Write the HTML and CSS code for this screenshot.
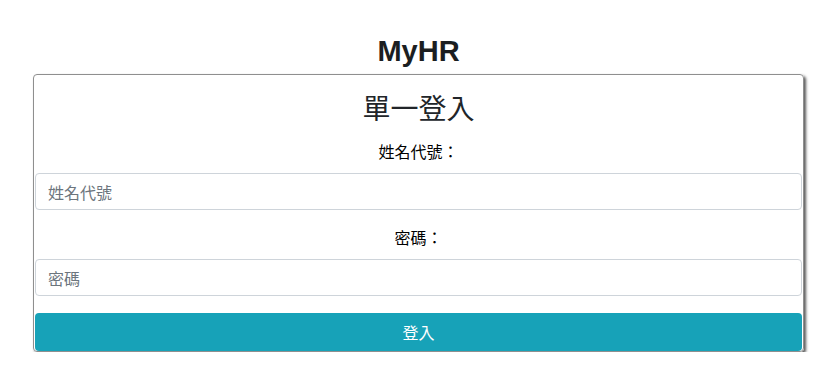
FILE: index.html
```html
<!DOCTYPE html>
<html>

<head>
    <meta charset="utf-8">
    <meta name="viewport" content="width=device-width,initial-scale=1.0">
    <title>MyHR</title>
    <link rel="stylesheet" href="styles.css">
</head>

<body>
    <div id="wrap">
        <h1 class="brand">MyHR</h1>
        <form class="login-card">
            <h2 class="login-title">單一登入</h2>
            <div class="field">
                <label for="account">姓名代號：</label>
                <input type="text" id="account" class="form-input" placeholder="姓名代號">
            </div>
            <div class="field">
                <label for="password">密碼：</label>
                <input type="password" id="password" class="form-input" placeholder="密碼">
            </div>
            <button type="button" class="btn-login">登入</button>
        </form>
    </div>
</body>

</html>
```

FILE: styles.css
```css
html,
body {
    margin: 0;
    padding: 0;
    background: #fff;
}

body {
    font-family: "Liberation Sans", "Noto Sans CJK TC", Arial, sans-serif;
    color: #212529;
}

#wrap {
    padding: 34px 33px 0;
}

.brand {
    margin: 0 0 6px;
    font-size: 29px;
    line-height: 34px;
    font-weight: bold;
    text-align: center;
    color: #1b1e21;
}

.login-card {
    border: 1px solid #8f8f8f;
    border-radius: 4px;
    box-shadow: 2px 2px 3px rgba(0, 0, 0, 0.65);
    padding: 12px 0 0;
    text-align: center;
}

.login-title {
    margin: 0 0 12px;
    font-family: "Noto Sans CJK TC", sans-serif;
    font-size: 28px;
    line-height: 40px;
    font-weight: normal;
}

.field {
    margin-bottom: 15px;
}

.field label {
    display: block;
    margin-bottom: 10px;
    font-family: "Noto Sans CJK TC", sans-serif;
    font-size: 16px;
    line-height: 24px;
    color: #000;
}

.form-input {
    display: block;
    box-sizing: border-box;
    width: calc(100% - 2px);
    height: 37px;
    margin: 0 1px;
    padding: 0 12px;
    border: 1px solid #ced4da;
    border-radius: 4px;
    font-family: "Noto Sans CJK TC", sans-serif;
    font-size: 16px;
    color: #495057;
    outline: none;
}

.form-input::placeholder {
    color: #6c757d;
}

.btn-login {
    display: block;
    width: calc(100% - 2px);
    height: 38px;
    margin: 17px 1px 0;
    border: none;
    border-radius: 4px;
    background: #17a2b8;
    color: #fff;
    font-family: "Noto Sans CJK TC", sans-serif;
    font-size: 16px;
}
```
